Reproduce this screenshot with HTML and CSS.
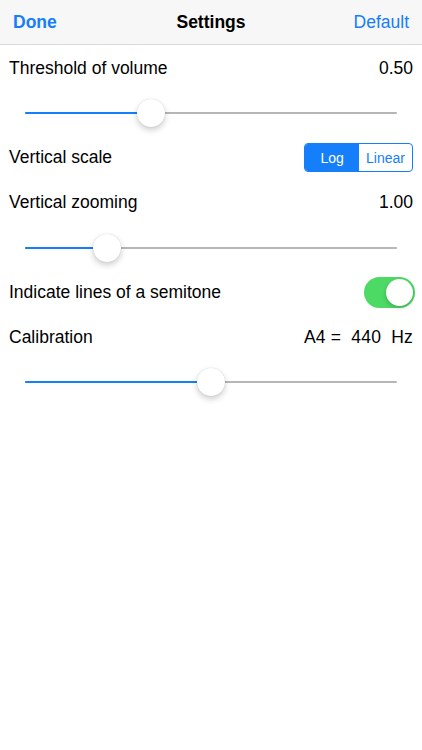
FILE: index.html
```html
<!DOCTYPE html>
<html lang="en">
<head>
  <meta charset="UTF-8">
  <title>Settings</title>
  <meta name="viewport" content="width=device-width, initial-scale=1.0">
  <link rel="stylesheet" href="styles.css">
</head>
<body>

<header class="navbar">
  <span class="nav-btn done">Done</span>
  <span class="nav-title">Settings</span>
  <span class="nav-btn right">Default</span>
</header>

<div class="list">
  <div class="row">
    <span>Threshold of volume</span>
    <span>0.50</span>
  </div>
  <div class="row slider-row">
    <div class="track">
      <div class="fill" style="width: 33.9%"></div>
      <div class="thumb" style="left: 33.9%"></div>
    </div>
  </div>

  <div class="row">
    <span>Vertical scale</span>
    <div class="segmented">
      <span class="seg active">Log</span>
      <span class="seg">Linear</span>
    </div>
  </div>

  <div class="row">
    <span>Vertical zooming</span>
    <span>1.00</span>
  </div>
  <div class="row slider-row">
    <div class="track">
      <div class="fill" style="width: 22%"></div>
      <div class="thumb" style="left: 22%"></div>
    </div>
  </div>

  <div class="row">
    <span>Indicate lines of a semitone</span>
    <div class="switch on"><div class="knob"></div></div>
  </div>

  <div class="row">
    <span>Calibration</span>
    <span class="calib">A4 =&nbsp; 440&nbsp; Hz</span>
  </div>
  <div class="row slider-row">
    <div class="track">
      <div class="fill" style="width: 50%"></div>
      <div class="thumb" style="left: 50%"></div>
    </div>
  </div>
</div>

</body>
</html>
```

FILE: styles.css
```css
body { margin: 0; background: #fff; font-family: 'Liberation Sans', Arial, sans-serif; color: #000; }

.navbar { height: 44px; background: #f7f7f7; border-bottom: 1px solid #d8d8d8; display: grid; grid-template-columns: 1fr auto 1fr; align-items: center; padding: 0 13px; font-size: 17.5px; }
.nav-btn { color: #157efb; }
.nav-btn.done { font-weight: bold; }
.nav-btn.right { justify-self: end; }
.nav-title { font-weight: bold; }

.list { padding: 1px 9px 0; }
.row { height: 44.8px; display: flex; align-items: center; justify-content: space-between; font-size: 17.5px; }

.slider-row { padding: 0 16px; }
.track { position: relative; flex: 1; height: 2px; background: #b6b6b6; border-radius: 1px; }
.fill { height: 2px; background: #157efb; border-radius: 1px; }
.thumb { position: absolute; top: -13px; width: 28px; height: 28px; margin-left: -14px; border-radius: 50%; background: #fff; box-shadow: 0 3px 6px rgba(0,0,0,0.2), 0 0 1px rgba(0,0,0,0.2); }

.segmented { display: flex; border: 1px solid #157efb; border-radius: 4px; overflow: hidden; height: 27px; }
.seg { display: flex; align-items: center; justify-content: center; font-size: 14px; color: #157efb; padding: 0 7px; }
.seg.active { background: #157efb; color: #fff; width: 40px; }

.switch { width: 51px; height: 31px; border-radius: 16px; background: #4cd964; position: relative; margin-right: -2px; }
.knob { position: absolute; top: 2px; right: 2px; width: 27px; height: 27px; border-radius: 50%; background: #fff; box-shadow: 0 2px 4px rgba(0,0,0,0.2); }

.calib { letter-spacing: 0.2px; }
```
